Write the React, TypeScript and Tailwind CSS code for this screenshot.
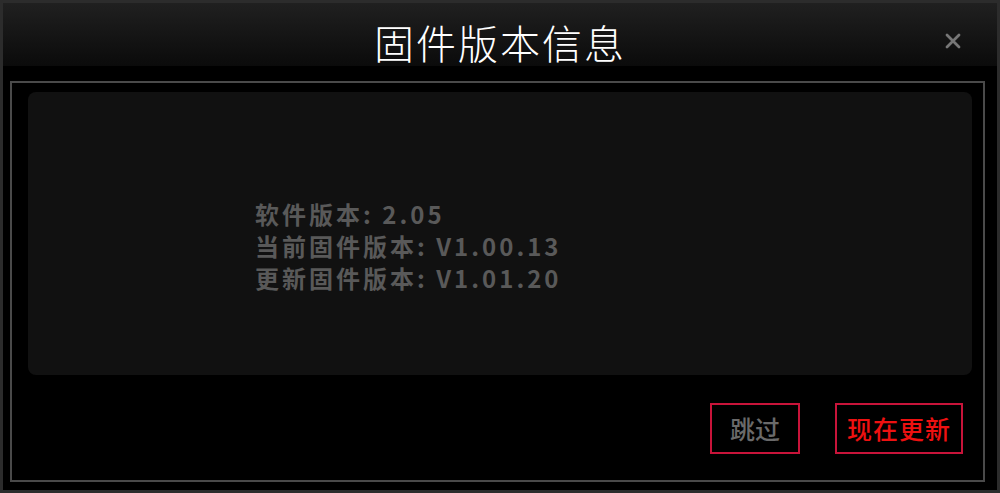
import React from 'react';

const cjk = { fontFamily: '"Noto Sans CJK SC", "Noto Sans", sans-serif' };

function CloseIcon() {
  return (
    <svg width="16" height="16" viewBox="0 0 16 16" className="text-[#777777]">
      <path d="M2 2 L14 14 M14 2 L2 14" stroke="currentColor" strokeWidth="2.8" strokeLinecap="round" />
    </svg>
  );
}

export default function App() {
  const lines = [
    ['软件版本:', '2.05'],
    ['当前固件版本:', 'V1.00.13'],
    ['更新固件版本:', 'V1.01.20'],
  ];

  return (
    <div className="w-[1000px] h-[493px] bg-black border-[3px] border-[#2c2c2c] flex flex-col" style={cjk}>
      <div className="h-[63px] shrink-0 bg-gradient-to-b from-[#202020] to-[#0b0b0b] grid grid-cols-[1fr_auto_1fr] items-center">
        <div />
        <div className="pt-[14px] text-[40px] leading-none font-light tracking-[2px] text-white">固件版本信息</div>
        <div className="flex justify-end pr-[36px] pt-[12px]">
          <CloseIcon />
        </div>
      </div>

      <div className="flex-1 flex flex-col mt-[15px] ml-[7px] mr-[12px] mb-[8px] border-2 border-[#4a4a4a]">
        <div className="mt-[9px] ml-[16px] mr-[11px] h-[283px] rounded-[8px] bg-[#111111] pt-[106px] pl-[227px]">
          {lines.map(([label, value]) => (
            <div key={label} className="text-[24px] leading-[32px] font-bold tracking-[3px] text-[#595959]">
              {label} {value}
            </div>
          ))}
        </div>

        <div className="flex justify-end gap-[35px] mt-[28px] pr-[20px]">
          <button className="w-[90px] h-[51px] border-2 border-[#c8143a] flex items-center justify-center text-[25px] font-medium text-[#6a6a6a]">
            跳过
          </button>
          <button className="w-[128px] h-[51px] border-2 border-[#c8143a] flex items-center justify-center text-[25px] font-medium tracking-[1px] text-[#ee1111]">
            现在更新
          </button>
        </div>
      </div>
    </div>
  );
}
